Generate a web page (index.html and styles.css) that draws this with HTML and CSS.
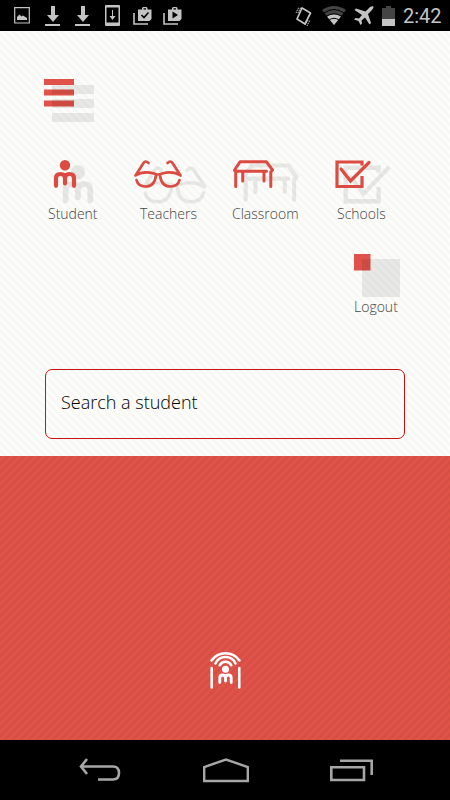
FILE: index.html
```html
<!DOCTYPE html>
<html lang="en">
<head>
<meta charset="utf-8">
<title>Students</title>
<link rel="stylesheet" href="styles.css">
</head>
<body>
<svg class="defs" aria-hidden="true">
  <defs>
    <g id="student"><circle cx="12" cy="5.200" r="5.200" fill="currentColor"/><path d="M3 25.800V18Q3 14 7.500 14Q12 14 12 18V23.500M12 18Q12 14 16.500 14Q21 14 21 18V25.800" fill="none" stroke="currentColor" stroke-width="4.200" stroke-linecap="round" stroke-linejoin="round"/></g>
    <g id="glasses" fill="none" stroke="currentColor" stroke-width="2.700" stroke-linecap="round" stroke-linejoin="round"><path d="M14.500 3Q11.500 0 9.500 3L1.500 15.500Q9 10.500 20 13.500Q24 15.500 28 13.500Q39 10.500 46.500 15.500L38.500 3Q36.500 0 33.500 3M2.500 20Q4 26.500 11.500 26.500Q20.500 26.500 22 15.500M26 15.500Q27.500 26.500 36.500 26.500Q44 26.500 45.500 20"/></g>
    <g id="desk" fill="none" stroke="currentColor" stroke-width="3" stroke-linecap="round" stroke-linejoin="round"><path d="M2.700 26.500V12L1.500 10L7 1.800H33.500L39.500 10L37.800 12V26.500M2 11.300H33.500M9.700 12V21M31 12V21"/></g>
    <g id="check" fill="none" stroke="currentColor" stroke-width="3.200"><path d="M27 5.500V2H2V26.500H27V16"/><path d="M6 9L15.500 21L34 2.500" stroke-linecap="round"/></g>
    <g id="download"><path d="M6 0H10V9H14L8 16L2 9H6ZM0 18H15V20H0Z" fill="currentColor"/></g>
  </defs>
</svg>
<header class="status">
  <div class="notifications">
    <svg width="16" height="17" viewBox="0 0 16 17"><path d="M.7 .7H15.300V16H.7Z" fill="none" stroke="currentColor" stroke-width="1.200"/><path d="M3 13V10L5.500 7.500L7.500 9.500L9 8.500L13 11V13Z" fill="currentColor"/></svg>
    <svg width="15" height="20" viewBox="0 0 15 20"><use href="#download"/></svg>
    <svg width="15" height="20" viewBox="0 0 15 20"><use href="#download"/></svg>
    <svg width="15" height="21" viewBox="0 0 15 21"><path fill="currentColor" fill-rule="evenodd" d="M1 0H14Q15 0 15 1V20Q15 21 14 21H1Q0 21 0 20V1Q0 0 1 0ZM1.500 2.500V17.500H13.500V2.500ZM7 5H8V11H10.500L7.500 15L4.500 11H7Z"/></svg>
    <svg width="20" height="19" viewBox="0 0 20 19"><path d="M1 7V18H15" fill="none" stroke="currentColor" stroke-width="1.600"/><path fill="currentColor" fill-rule="evenodd" d="M5 3.500H9V2L10 1H13.500L14.500 2V3.500H18.500V13L16.500 15H5ZM10.500 3.500H13V2.200H10.500Z"/><path d="M8.500 9L11 11.500L15.500 6.500" fill="none" stroke="#000" stroke-width="1.600"/></svg>
    <svg width="20" height="19" viewBox="0 0 20 19"><path d="M1 7V18H15" fill="none" stroke="currentColor" stroke-width="1.600"/><path fill="currentColor" fill-rule="evenodd" d="M5 3.500H9V2L10 1H13.500L14.500 2V3.500H18.500V13L16.500 15H5ZM10.500 3.500H13V2.200H10.500Z"/><path d="M9.500 5.500L15 9L9.500 12.500Z" fill="#000"/></svg>
  </div>
  <div class="system">
    <svg width="20" height="22" viewBox="0 0 20 22"><path d="M8 3L16.500 8L11 19L3 14Z" fill="none" stroke="currentColor" stroke-width="1.700" stroke-linejoin="round"/><path d="M2 8L5 2M4 8L7 2M11 20L14 15M13 21L16 15" stroke="currentColor" stroke-dasharray="1.500 .7"/></svg>
    <svg width="24" height="19" viewBox="0 0 24 19"><path d="M12 19L0 4Q12 -4 24 4Z" fill="#444"/><path d="M12 19L5 10.500Q12 6 19 10.500Z" fill="currentColor"/><path d="M2 7Q12 0 22 7M4 10.500Q12 5 20 10.500M7 14Q12 10.500 17 14" fill="none" stroke="#000" stroke-width="1"/></svg>
    <svg width="20" height="19" viewBox="0 0 20 19"><path d="M19.500 .5Q17 -.5 15 2L11.500 5.500L2 2.500L.5 4L8 9L5 12.500L1.500 12L0 13.500L4.500 15L6.500 19L8 17.500L7.500 14.500L11 11.500L15.500 18.500L17 17L14 8L17.500 4.500Q20 2 19.500 .5Z" fill="currentColor"/></svg>
    <svg width="13" height="20" viewBox="0 0 13 20"><path d="M0 2H4V0H9V2H13V13H0Z" fill="#444"/><path d="M0 13H13V20H0Z" fill="currentColor"/></svg>
    <span class="clock">2:42</span>
  </div>
</header>
<main class="content">
  <svg class="menu" width="51" height="45" viewBox="0 0 51 45"><path class="bars" d="M0 0H30V6H0ZM0 10.500H30V16.500H0ZM0 21.500H30V27.500H0Z"/><path class="ghost" d="M8 6H50V15H8ZM8 20H50V29H8ZM8 34H50V43H8Z" fill="currentColor"/></svg>
  <nav class="links">
    <a class="item"><svg width="42" height="46" viewBox="0 0 42 46"><use class="ghost" href="#student" transform="translate(8.500 5) scale(1.370)"/><use href="#student"/></svg><span>Student</span></a>
    <a class="item"><svg width="74" height="46" viewBox="0 0 74 46"><use class="ghost" href="#glasses" transform="translate(8 6) scale(1.350)"/><use href="#glasses"/></svg><span>Teachers</span></a>
    <a class="item"><svg width="66" height="46" viewBox="0 0 66 46"><use class="ghost" href="#desk" transform="translate(9 3) scale(1.380)"/><use href="#desk"/></svg><span>Classroom</span></a>
    <a class="item"><svg width="56" height="46" viewBox="0 0 56 46"><use class="ghost" href="#check" transform="translate(8 5) scale(1.320 1.370)"/><use href="#check"/></svg><span>Schools</span></a>
  </nav>
  <a class="logout"><svg width="46" height="44" viewBox="0 0 46 44"><path class="bars" d="M0 0H16.500V16.500H0Z"/><path class="ghost" d="M8 5H46V43H8Z" fill="currentColor"/></svg><span>Logout</span></a>
  <input class="search" type="text" placeholder="Search a student" aria-label="Search a student">
</main>
<footer class="brand">
  <svg width="32" height="40" viewBox="0 0 32 40"><path d="M1.700 17V36.500M29.300 17V36.500M1.500 9.500A17 17 0 0 1 29.500 9.500M5.500 12.500A11 11 0 0 1 25.500 12.500M9.700 14.300A6.600 6.600 0 0 1 21.300 14.300" fill="none" stroke="#fff" stroke-width="2.500" stroke-linecap="round"/><circle cx="15.500" cy="18.200" r="3.500" fill="#fff"/><path d="M9.800 31.500V27Q9.800 24 12.500 24Q15.500 24 15.500 27V30M15.500 27Q15.500 24 18.500 24Q21.200 24 21.200 27V31.500" fill="none" stroke="#fff" stroke-width="2.900" stroke-linecap="round"/></svg>
</footer>
<nav class="navbar">
  <svg width="42" height="25" viewBox="0 0 42 25"><path d="M8 1L2 8.500L8 16M2 8.500H34Q40 8.500 40 15T34 21.500H19" fill="none" stroke="currentColor" stroke-width="2.600"/></svg>
  <svg width="46" height="25" viewBox="0 0 46 25"><path d="M1.200 23V9L23 1.500L44.800 9V23Z" fill="none" stroke="currentColor" stroke-width="2.400"/></svg>
  <svg width="43" height="23" viewBox="0 0 43 23"><path d="M1.300 8.300H34V21H1.300ZM10 1.800H41.700V16" fill="none" stroke="currentColor" stroke-width="2.600"/></svg>
</nav>
</body>
</html>
```

FILE: styles.css
```css
* { box-sizing: border-box; }
body { margin: 0; height: 800px; display: grid; grid-template-rows: 31px 425.4px 283.6px 60px; overflow: hidden; font-family: "Open Sans", sans-serif; }
svg { display: block; flex: none; overflow: visible; }
.defs { position: absolute; width: 0; height: 0; }
.status { background: #000; color: #c4c4c4; display: flex; justify-content: space-between; padding: 5px 9px 0 14px; }
.notifications { display: flex; align-items: center; gap: 15px; height: 21px; }
.notifications svg:nth-child(5) { margin-left: -2px; }
.notifications svg:nth-child(6) { margin-left: -5px; }
.system { display: flex; align-items: center; gap: 8px; height: 21px; }
.clock { font-family: Roboto, sans-serif; font-size: 20px; line-height: 22px; width: 38px; white-space: nowrap; }
.content { padding: 48px 44px 0; color: #dc4b41; background: repeating-linear-gradient(45deg, #fcfcf9 0, #fcfcf9 2px, #f7f7f5 3px, #f7f7f5 5px, #fcfcf9 5.657px); }
.ghost { color: #000; opacity: .08; }
.bars { fill: #dc3a31; fill-opacity: .88; }
.links { display: grid; grid-template-columns: 90px 98px 102px 70px; margin-top: 36px; }
.item span, .logout span { display: block; color: #444; font-size: 14px; font-weight: 300; line-height: 18px; white-space: nowrap; }
.item span { margin: -1px 0 0 4px; }
.item svg { margin-left: 9px; }
.item:nth-child(2) svg { margin-left: 0; }
.item:nth-child(2) span { margin-left: 6px; }
.item:nth-child(3) svg { margin-left: .5px; }
.item:nth-child(3) span { margin-left: 0; }
.item:nth-child(4) svg { margin-left: 1px; }
.item:nth-child(4) span { margin-left: 3px; }
.logout { display: block; width: 46px; margin: 31px 6px 0 auto; }
.search { display: block; width: 360px; height: 70px; margin: 53px 0 0 1px; padding: 0 15px 4px; border: 1px solid #ca1010; border-radius: 7px; background: transparent; font: 300 18px "Open Sans", sans-serif; outline: 0; }
.search::placeholder { color: #000; opacity: 1; }
.brand { color: #fff; padding: 195px 0 0 210px; background: repeating-linear-gradient(-45deg, #df5348 0, #df5348 2px, #d64e45 3px, #d64e45 5px, #df5348 5.657px); }
.navbar { background: #000; color: #a6a6a6; display: flex; justify-content: space-between; align-items: center; padding: 2px 77px 0 79px; }
```
